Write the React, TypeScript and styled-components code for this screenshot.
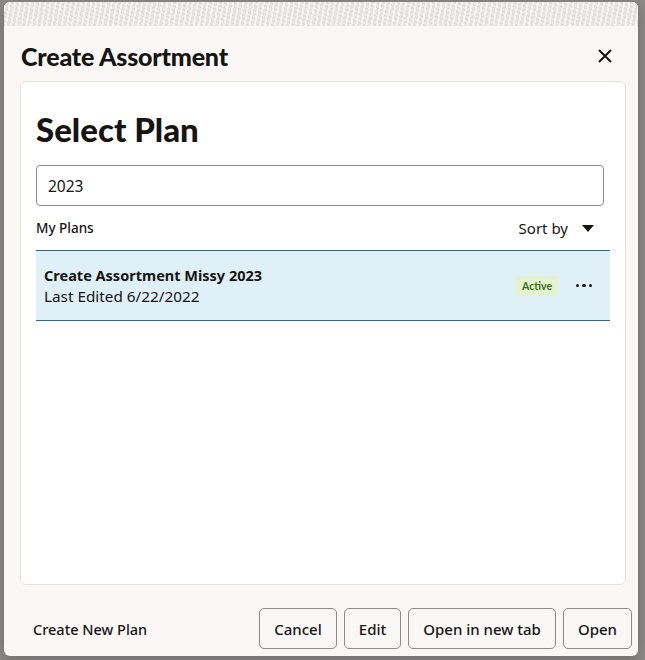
import React from "react";
import styled, { createGlobalStyle } from "styled-components";

const GlobalStyle = createGlobalStyle`
  html, body {
    margin: 0;
    padding: 0;
    background: #8d8c8b;
  }
  body {
    font-family: "Noto Sans", "Open Sans", sans-serif;
    color: #161513;
  }
  * {
    box-sizing: border-box;
  }
`;

const Page = styled.div`
  width: 645px;
  height: 660px;
  padding: 2px 7px 4px 4px;
  overflow: hidden;
`;

const Dialog = styled.div`
  height: 654px;
  background: #f9f8f6;
  border-radius: 6px;
  box-shadow: 0 4px 16px rgba(0, 0, 0, 0.25);
  display: flex;
  flex-direction: column;
  overflow: hidden;
`;

const DragStrip = styled.div`
  height: 24px;
  flex: none;
  background-color: #e7e6e4;
  background-image: repeating-linear-gradient(
      100deg,
      rgba(255, 255, 255, 0.55) 0 2px,
      transparent 2px 5px
    ),
    repeating-linear-gradient(
      20deg,
      rgba(0, 0, 0, 0.04) 0 1px,
      transparent 1px 4px
    );
`;

const Header = styled.div`
  display: flex;
  align-items: center;
  justify-content: space-between;
  height: 55px;
  padding: 4px 22px 0 17px;
  flex: none;
`;

const Title = styled.h1`
  margin: 0;
  font-family: "Lato", "Noto Sans", sans-serif;
  font-size: 25px;
  font-weight: 900;
  letter-spacing: -0.2px;
`;

const CloseButton = styled.button`
  border: none;
  background: transparent;
  padding: 0;
  width: 22px;
  height: 22px;
  display: flex;
  align-items: center;
  justify-content: center;
  cursor: pointer;
`;

const Card = styled.div`
  flex: none;
  height: 504px;
  margin: 0 12px 0 16px;
  background: #ffffff;
  border: 1px solid #e4e2df;
  border-radius: 6px;
  padding: 22px 15px 0 15px;
  display: flex;
  flex-direction: column;
`;

const Heading = styled.h2`
  margin: 0 0 11px;
  font-family: "Lato", "Noto Sans", sans-serif;
  font-size: 33px;
  font-weight: 900;
  line-height: 50px;
`;

const SearchInput = styled.input`
  width: 568px;
  height: 41px;
  border: 1px solid #8c8b89;
  border-radius: 4px;
  padding: 0 11px;
  font-family: "Noto Sans", sans-serif;
  font-size: 15.5px;
  color: #161513;
  outline: none;
`;

const ListHeader = styled.div`
  display: flex;
  align-items: center;
  justify-content: space-between;
  height: 44px;
  padding-right: 16px;
`;

const ListLabel = styled.span`
  font-size: 13.5px;
  font-weight: 500;
`;

const SortButton = styled.button`
  border: none;
  background: transparent;
  padding: 0;
  display: flex;
  align-items: center;
  gap: 14px;
  font-family: "Noto Sans", sans-serif;
  font-size: 15px;
  color: #161513;
  cursor: pointer;
`;

const PlanRow = styled.div<{ $selected?: boolean }>`
  display: flex;
  align-items: center;
  justify-content: space-between;
  height: 71px;
  padding: 0 16px 0 8px;
  background: ${(p) => (p.$selected ? "#dff0f6" : "#ffffff")};
  border-top: 1px solid #23708a;
  border-bottom: 1px solid #23708a;
`;

const PlanText = styled.div`
  display: flex;
  flex-direction: column;
  line-height: 21px;
  font-size: 15.3px;
`;

const PlanName = styled.span`
  font-size: 14.5px;
  font-weight: 700;
`;

const PlanMeta = styled.div`
  display: flex;
  align-items: center;
  gap: 16px;
`;

const Badge = styled.span`
  display: inline-flex;
  align-items: center;
  height: 20px;
  padding: 0 6px;
  background: #e3f3cf;
  color: #3c6b1d;
  border-radius: 3px;
  font-family: "Lato", sans-serif;
  font-size: 10.5px;
  font-weight: 700;
`;

const MoreButton = styled.button`
  border: none;
  background: transparent;
  padding: 0;
  width: 20px;
  display: flex;
  gap: 3px;
  justify-content: center;
  cursor: pointer;
`;

const Dot = styled.span`
  width: 3.5px;
  height: 3.5px;
  border-radius: 50%;
  background: #161513;
`;

const Footer = styled.div`
  flex: 1;
  display: flex;
  align-items: center;
  justify-content: space-between;
  padding: 16px 6px 0 29px;
`;

const LinkButton = styled.button`
  border: none;
  background: transparent;
  padding: 0;
  font-family: "Noto Sans", sans-serif;
  font-size: 14.5px;
  font-weight: 500;
  color: #161513;
  cursor: pointer;
`;

const Actions = styled.div`
  display: flex;
  gap: 7px;
`;

const Button = styled.button`
  height: 41px;
  padding: 0 14px;
  border: 1px solid #8c8b89;
  border-radius: 5px;
  background: #f9f8f6;
  font-family: "Noto Sans", sans-serif;
  font-size: 15px;
  font-weight: 500;
  color: #161513;
  cursor: pointer;
`;

const CloseIcon = () => (
  <svg width="14" height="14" viewBox="0 0 14 14">
    <path d="M1 1 L13 13 M13 1 L1 13" stroke="#161513" strokeWidth="2" />
  </svg>
);

const CaretDown = () => (
  <svg width="12" height="7" viewBox="0 0 12 7">
    <path d="M0 0 H12 L6 7 Z" fill="#161513" />
  </svg>
);

export default function App() {
  return (
    <>
      <GlobalStyle />
      <Page>
        <Dialog>
          <DragStrip />
          <Header>
            <Title>Create Assortment</Title>
            <CloseButton aria-label="Close">
              <CloseIcon />
            </CloseButton>
          </Header>
          <Card>
            <Heading>Select Plan</Heading>
            <SearchInput defaultValue="2023" />
            <ListHeader>
              <ListLabel>My Plans</ListLabel>
              <SortButton>
                Sort by
                <CaretDown />
              </SortButton>
            </ListHeader>
            <PlanRow $selected>
              <PlanText>
                <PlanName>Create Assortment Missy 2023</PlanName>
                <span>Last Edited 6/22/2022</span>
              </PlanText>
              <PlanMeta>
                <Badge>Active</Badge>
                <MoreButton aria-label="More">
                  <Dot />
                  <Dot />
                  <Dot />
                </MoreButton>
              </PlanMeta>
            </PlanRow>
          </Card>
          <Footer>
            <LinkButton>Create New Plan</LinkButton>
            <Actions>
              <Button>Cancel</Button>
              <Button>Edit</Button>
              <Button>Open in new tab</Button>
              <Button>Open</Button>
            </Actions>
          </Footer>
        </Dialog>
      </Page>
    </>
  );
}
